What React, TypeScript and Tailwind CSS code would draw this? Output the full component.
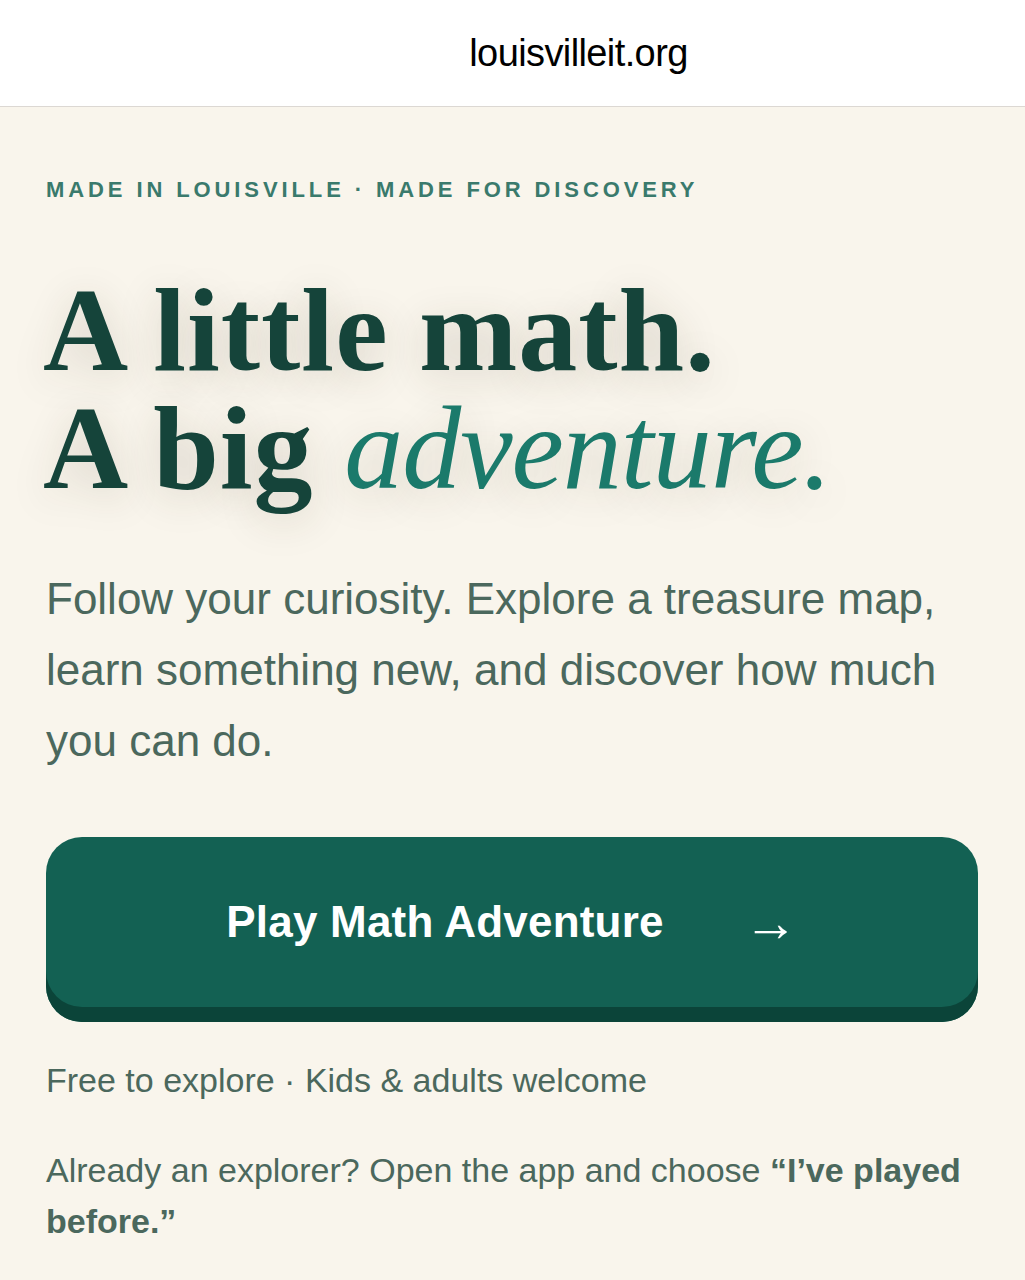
export default function App() {
  return (
    <div className="min-h-[1280px] bg-[#f9f5ec] font-['Liberation_Sans',Arial,sans-serif]">
      <header className="flex h-[107px] items-center justify-center border-b border-[#dcd8d3] bg-white pl-[132px]">
        <span className="text-[38px] tracking-[-0.6px] text-black">louisvilleit.org</span>
      </header>

      <main className="px-[46px] pt-[66px]">
        <p className="text-[22px] font-bold uppercase tracking-[3.9px] text-[#3a7a6c]">
          Made in Louisville · Made for discovery
        </p>

        <h1 className="mt-[66px] font-['Liberation_Serif','Times_New_Roman',serif] text-[118px] leading-[118px] font-bold tracking-[1px] text-[#15443a] [text-shadow:0_8px_40px_rgba(60,50,30,0.18)]">
          <span className="block -ml-[3px]">A little math.</span>
          <span className="block -ml-[3px]">
            A big{" "}
            <em className="font-normal tracking-[-1px] text-[#1b7a6b]">adventure.</em>
          </span>
        </h1>

        <p className="mt-[55px] text-[44px] leading-[71px] text-[#4b685d]">
          Follow your curiosity. Explore a treasure map, learn something new, and discover how much you can do.
        </p>

        <button className="mt-[61px] flex h-[185px] w-[932px] items-center justify-center gap-[80px] rounded-[36px] bg-[#136153] pb-[15px] text-white shadow-[inset_0_-15px_0_#0b4439]">
          <span className="text-[44px] font-bold tracking-[0.2px]">Play Math Adventure</span>
          <span className="text-[54px] leading-none">→</span>
        </button>

        <p className="mt-[33px] text-[34px] text-[#4b685d]">Free to explore · Kids &amp; adults welcome</p>

        <p className="mt-[39px] text-[34px] leading-[51px] text-[#4b685d]">
          Already an explorer? Open the app and choose <strong className="font-bold">“I’ve played before.”</strong>
        </p>
      </main>
    </div>
  );
}
